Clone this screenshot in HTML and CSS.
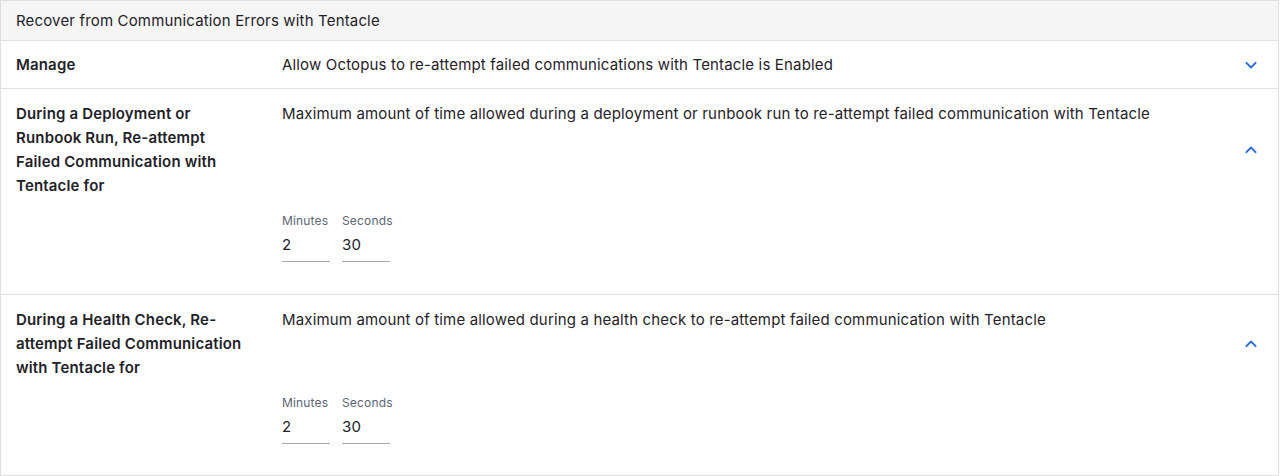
FILE: index.html
```html
<!DOCTYPE html>
<html lang="en">
<head>
    <meta charset="UTF-8">
    <meta name="viewport" content="width=device-width, initial-scale=1.0">
    <title>Tentacle Communication Settings</title>
    <link rel="stylesheet" href="styles.css">
</head>
<body>
    <div class="section">
        <div class="section-header">Recover from Communication Errors with Tentacle</div>

        <!-- Collapsed row -->
        <div class="setting">
            <div class="setting-title">Manage</div>
            <div class="setting-summary">Allow Octopus to re-attempt failed communications with Tentacle is Enabled</div>
            <button class="toggle" aria-label="Expand">
                <svg viewBox="0 0 24 24" width="20" height="20"><path d="M6.5 9.5l5.5 5.5 5.5-5.5"/></svg>
            </button>
        </div>

        <!-- Expanded rows -->
        <div class="setting expanded">
            <div class="setting-title">During a Deployment or Runbook Run, Re-attempt Failed Communication with Tentacle for</div>
            <div class="setting-summary">Maximum amount of time allowed during a deployment or runbook run to re-attempt failed communication with Tentacle</div>
            <button class="toggle" aria-label="Collapse">
                <svg viewBox="0 0 24 24" width="20" height="20"><path d="M6.5 14.5l5.5-5.5 5.5 5.5"/></svg>
            </button>
            <div class="setting-body">
                <div class="field">
                    <label for="deployMinutes">Minutes</label>
                    <input type="text" id="deployMinutes" value="2">
                </div>
                <div class="field">
                    <label for="deploySeconds">Seconds</label>
                    <input type="text" id="deploySeconds" value="30">
                </div>
            </div>
        </div>

        <div class="setting expanded">
            <div class="setting-title">During a Health Check, Re-attempt Failed Communication with Tentacle for</div>
            <div class="setting-summary">Maximum amount of time allowed during a health check to re-attempt failed communication with Tentacle</div>
            <button class="toggle" aria-label="Collapse">
                <svg viewBox="0 0 24 24" width="20" height="20"><path d="M6.5 14.5l5.5-5.5 5.5 5.5"/></svg>
            </button>
            <div class="setting-body">
                <div class="field">
                    <label for="healthMinutes">Minutes</label>
                    <input type="text" id="healthMinutes" value="2">
                </div>
                <div class="field">
                    <label for="healthSeconds">Seconds</label>
                    <input type="text" id="healthSeconds" value="30">
                </div>
            </div>
        </div>
    </div>
</body>
</html>
```

FILE: styles.css
```css
:root {
    --border-color: #dedfe1;
    --header-bg: #f5f5f5;
    --text-color: #1f2228;
    --muted-color: #5c6577;
    --accent-color: #2f6fd3;
}

* {
    margin: 0;
    padding: 0;
    box-sizing: border-box;
}

body {
    font-family: Inter, 'Noto Sans', sans-serif;
    font-size: 15px;
    letter-spacing: 0.16px;
    color: var(--text-color);
    background: white;
}

.section {
    width: 1279px;
    border: 1px solid var(--border-color);
}

.section-header {
    background: var(--header-bg);
    padding: 8px 15px;
    line-height: 23px;
    border-bottom: 1px solid var(--border-color);
}

/* Setting rows */
.setting {
    display: grid;
    grid-template-columns: 236px 1fr 40px;
    column-gap: 30px;
    padding: 12px 15px 11px;
    line-height: 24px;
    border-bottom: 1px solid var(--border-color);
}

.setting.expanded {
    padding-top: 13px;
}

.setting:last-child {
    border-bottom: none;
    padding-bottom: 10px;
}

.setting-title {
    grid-column: 1;
    grid-row: 1;
    font-weight: 600;
}

.setting-summary {
    grid-column: 2;
    grid-row: 1;
    align-self: start;
}

.toggle {
    grid-column: 3;
    grid-row: 1;
    align-self: center;
    justify-self: end;
    width: 24px;
    height: 24px;
    display: flex;
    align-items: center;
    justify-content: center;
    background: none;
    border: none;
    cursor: pointer;
}

.toggle path {
    fill: none;
    stroke: var(--accent-color);
    stroke-width: 2.4;
    stroke-linecap: round;
    stroke-linejoin: round;
}

.setting-body {
    grid-column: 2;
    grid-row: 2;
    display: flex;
    gap: 12px;
    margin-top: 15px;
    padding-bottom: 21px;
}

/* Duration fields */
.field {
    width: 48px;
}

.field label {
    display: block;
    font-size: 12px;
    line-height: 16px;
    color: var(--muted-color);
}

.field input {
    width: 100%;
    border: none;
    border-bottom: 1px solid #a3a9b6;
    padding: 6px 0 6px;
    font-family: inherit;
    font-size: 15px;
    letter-spacing: inherit;
    line-height: 20px;
    color: var(--text-color);
    background: none;
    outline: none;
}
```
